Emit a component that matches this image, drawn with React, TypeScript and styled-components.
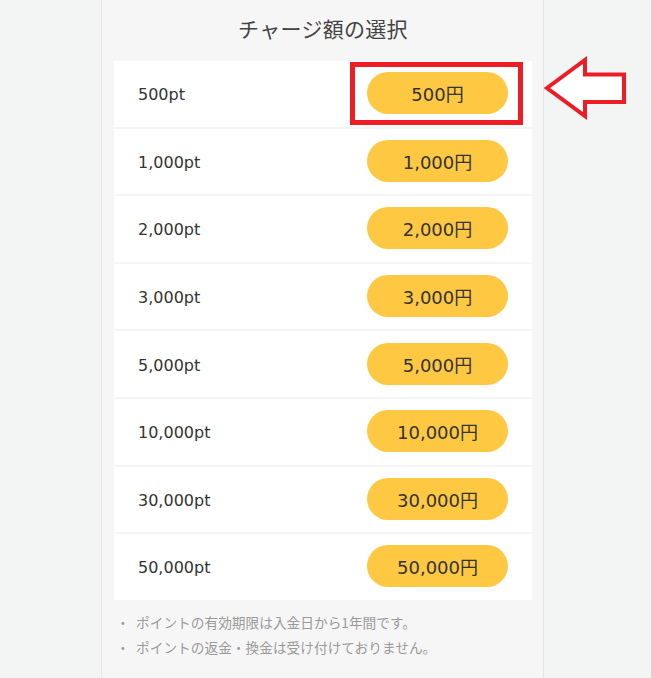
import React from "react";
import styled, { createGlobalStyle } from "styled-components";

const Global = createGlobalStyle`
  html, body {
    margin: 0;
    padding: 0;
    background: #f3f4f4;
    font-family: "DejaVu Sans", "Noto Sans CJK JP", sans-serif;
  }
`;

const Page = styled.div`
  position: relative;
  min-height: 678px;
  overflow: hidden;
`;

const Panel = styled.section`
  box-sizing: border-box;
  margin-left: 101px;
  width: 443px;
  min-height: 700px;
  background: #f6f6f6;
  border-left: 1px solid #e4e4e4;
  border-right: 1px solid #e4e4e4;
  padding: 0 11px 0 12px;
`;

const Title = styled.h2`
  box-sizing: border-box;
  margin: 0;
  height: 61px;
  padding-bottom: 6px;
  display: flex;
  align-items: center;
  justify-content: center;
  font-family: "Noto Sans CJK JP", sans-serif;
  font-weight: 400;
  font-size: 21px;
  color: #444;
  letter-spacing: 0.3px;
`;

const List = styled.div`
  display: flex;
  flex-direction: column;
  gap: 2px;
`;

const Row = styled.div`
  box-sizing: border-box;
  height: 65.6px;
  background: #fff;
  display: flex;
  align-items: center;
  justify-content: space-between;
  padding: 0 24px 0 24px;
`;

const Label = styled.span`
  font-family: "DejaVu Sans", "Noto Sans CJK JP", sans-serif;
  font-size: 16px;
  color: #333;
  padding-top: 2px;
`;

const Highlight = styled.div<{ $on?: boolean }>`
  position: relative;
  display: flex;
  margin-top: -1px;
  &::after {
    content: "";
    display: ${(p) => (p.$on ? "block" : "none")};
    position: absolute;
    left: -17px;
    right: -15px;
    top: -10px;
    bottom: -11px;
    border: 5px solid #ee1c25;
    pointer-events: none;
  }
`;

const PriceButton = styled.button`
  width: 141px;
  height: 42px;
  border: none;
  border-radius: 21px;
  background: #fec843;
  color: #333;
  font-family: "DejaVu Sans", "Noto Sans CJK JP", sans-serif;
  font-size: 18px;
  display: flex;
  align-items: center;
  justify-content: center;
  padding: 0;
  cursor: pointer;
`;

const Notes = styled.ul`
  list-style: none;
  margin: 10px 0 0;
  padding: 0;
`;

const Note = styled.li`
  display: flex;
  align-items: center;
  height: 25px;
  font-family: "Noto Sans CJK JP", sans-serif;
  font-size: 13.7px;
  color: #9a9a9a;
`;

const Bullet = styled.span`
  width: 22px;
  padding-left: 2px;
  box-sizing: border-box;
`;

const Arrow = styled.svg`
  position: absolute;
  left: 540px;
  top: 54px;
`;

const options = [
  { pt: "500pt", yen: "500円" },
  { pt: "1,000pt", yen: "1,000円" },
  { pt: "2,000pt", yen: "2,000円" },
  { pt: "3,000pt", yen: "3,000円" },
  { pt: "5,000pt", yen: "5,000円" },
  { pt: "10,000pt", yen: "10,000円" },
  { pt: "30,000pt", yen: "30,000円" },
  { pt: "50,000pt", yen: "50,000円" },
];

export default function App() {
  return (
    <Page>
      <Global />
      <Panel>
        <Title>チャージ額の選択</Title>
        <List>
          {options.map((o, i) => (
            <Row key={o.pt}>
              <Label>{o.pt}</Label>
              <Highlight $on={i === 0}>
                <PriceButton>{o.yen}</PriceButton>
              </Highlight>
            </Row>
          ))}
        </List>
        <Notes>
          <Note>
            <Bullet>・</Bullet>ポイントの有効期限は入金日から1年間です。
          </Note>
          <Note>
            <Bullet>・</Bullet>ポイントの返金・換金は受け付けておりません。
          </Note>
        </Notes>
      </Panel>
      <Arrow width="92" height="68" viewBox="540 54 92 68">
        <polygon
          points="547,88 585,60 585,74.5 624,74.5 624,102 585,102 585,116"
          fill="#fff"
          stroke="#ee1c25"
          strokeWidth="4"
          strokeLinejoin="miter"
        />
      </Arrow>
    </Page>
  );
}
